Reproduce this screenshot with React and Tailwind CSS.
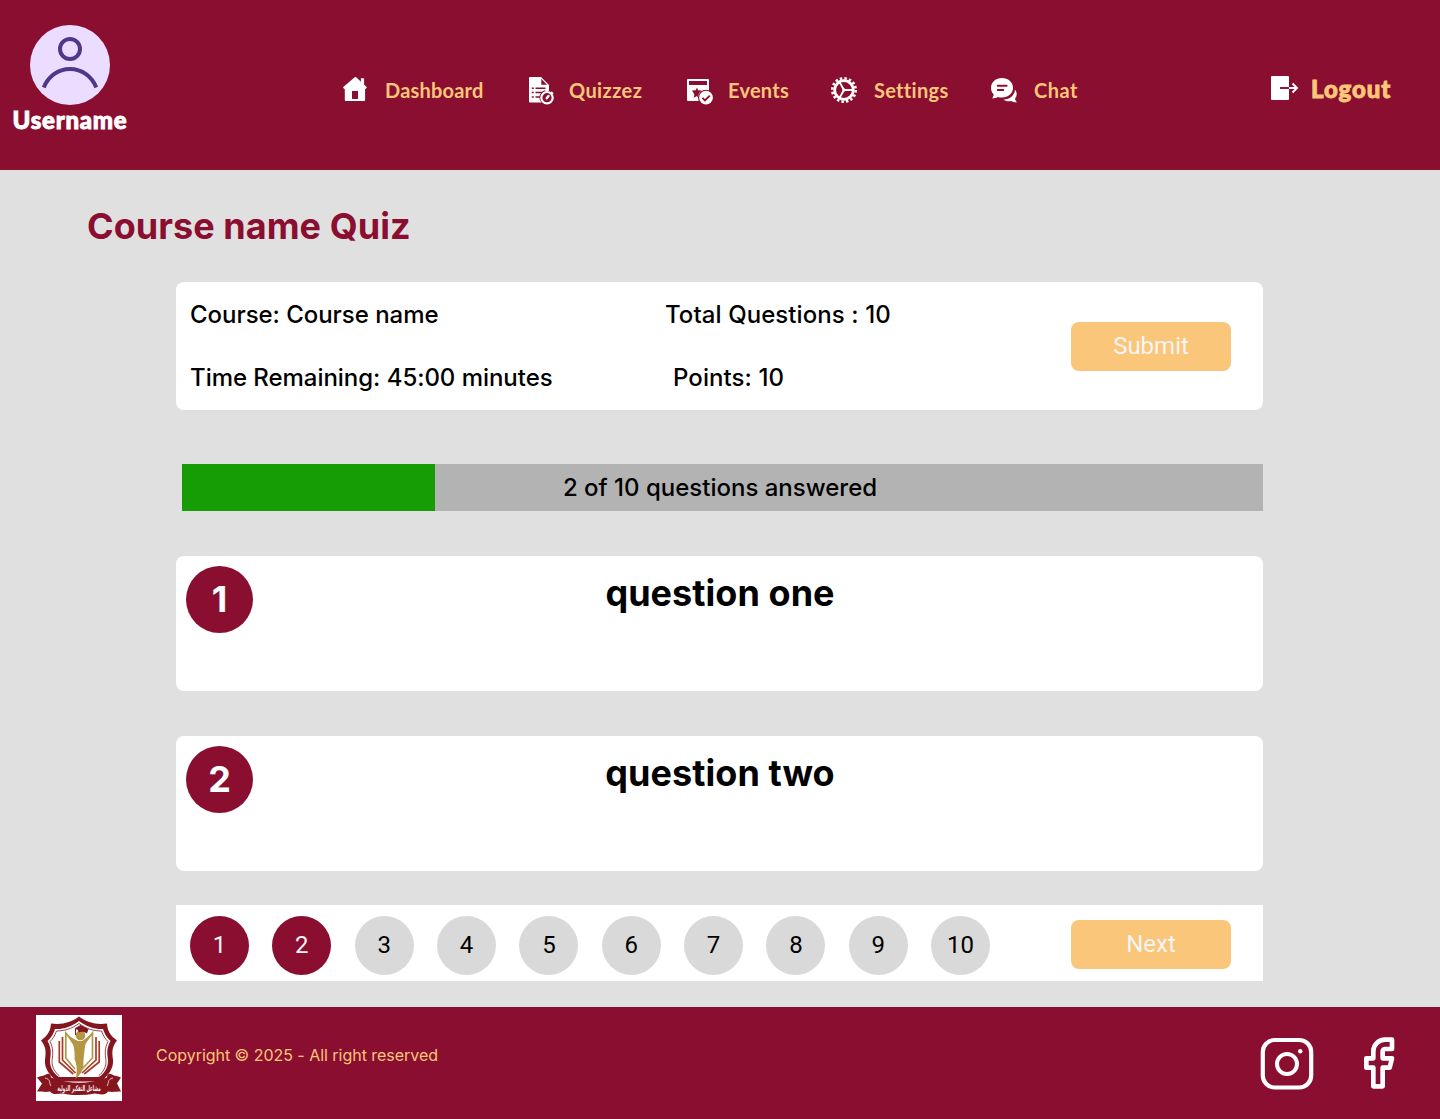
import React from "react";

function HomeIcon() {
  return (
    <svg width="28" height="30" viewBox="0 0 28 30" fill="none" className="block">
      <path fill="#fff" d="M14 2 2 12.300l1.100 1.800.700-.300V25a1 1 0 0 0 1 1h18.300a1 1 0 0 0 1-1V13.800l.700.300 1.100-1.800-2.800-2.800V3.200h-3.200v3.600L15.200 2.300z" />
      <path fill="#8a0e2f" d="M11 16h6v8h-6z" />
    </svg>
  );
}

function QuizIcon() {
  return (
    <svg width="28" height="30" viewBox="0 0 28 30" fill="none" className="block">
      <path fill="#fff" d="M2 2h11l8 8v15.500a2 2 0 0 1-2 2H2a1 1 0 0 1-1-1V3a1 1 0 0 1 1-1z" />
      <path fill="#8a0e2f" d="M13.300 3.700v6h5.600z" />
      <path stroke="#8a0e2f" strokeWidth="1.500" d="M3.800 13.300h2M7.500 13.300h10M3.800 17.600h2M7.500 17.600h8M3.800 22h2M7.500 22h5" />
      <circle cx="19" cy="22.500" r="7.600" fill="#8a0e2f" />
      <circle cx="19" cy="22.700" r="5.700" fill="#8a0e2f" stroke="#fff" strokeWidth="2.200" />
      <path stroke="#fff" strokeWidth="2.400" strokeLinecap="round" d="m18.700 23.300 1.800-2.300" />
      <path stroke="#fff" strokeWidth="1.600" strokeLinecap="round" d="M18 15.600h2M23.600 17.400l1 1" />
    </svg>
  );
}

function EventsIcon() {
  return (
    <svg width="28" height="30" viewBox="0 0 28 30" fill="none" className="block">
      <path fill="#fff" d="M2 4h20a1 1 0 0 1 1 1v21H2a1 1 0 0 1-1-1V5a1 1 0 0 1 1-1z" />
      <path fill="#8a0e2f" d="M3 6h18v4H3z" />
      <path fill="#8a0e2f" d="m11 12.500 1.100 2.800 3.700.2-2.600 2.400-1.300 2.500.4 1.700-1.700-.9-3 1.600.8-3.400L6 15.500l3.700-.2z" />
      <circle cx="20" cy="22.700" r="8" fill="#8a0e2f" />
      <circle cx="20" cy="22.700" r="6.900" fill="#fff" />
      <path stroke="#8a0e2f" strokeWidth="1.900" d="m16.500 22.900 2.500 2.500 4.700-4.700" />
    </svg>
  );
}

function SettingsIcon() {
  return (
    <svg width="28" height="30" viewBox="0 0 28 30" fill="none" stroke="#fff" className="block">
      <circle cx="14" cy="15" r="9.300" strokeWidth="2.700" />
      <circle cx="14" cy="15" r="11.700" strokeWidth="2.600" strokeDasharray="2.500 2.095" />
      <path strokeWidth="1.800" d="M15 15h8.500M13.500 14 9.400 7M13.500 16 9.400 23" />
      <path fill="#fff" stroke="none" d="m11.500 12 6 3-6 3 1-3z" />
    </svg>
  );
}

function ChatIcon() {
  return (
    <svg width="28" height="30" viewBox="0 0 28 30" fill="none" className="block">
      <path fill="#fff" d="M12 3c6 0 11 4 11 9.800s-5 9.800-11 9.800c-1.500 0-2.700-.2-4-.7-1.700 1-3.700 1.500-6 1.400 1-.9 1.600-2.300 1.700-3.800C1.900 17.700 1 15.500 1 12.800 1 7 6 3 12 3z" />
      <path stroke="#8a0e2f" strokeWidth="2" strokeLinecap="round" d="M7.800 10.800h8.800M7.800 15h5.500" />
      <path fill="#fff" d="M25 14.500c2.300 3 2.300 6.300.1 9 .1 1.500.7 2.600 1.900 3.700-2.200.1-4.200-.3-6-1.300-2.800.8-5.500.4-7.500-1.400 6 .1 11.200-4 11.500-10z" />
    </svg>
  );
}

function LogoutIcon() {
  return (
    <svg width="30" height="28" viewBox="0 0 30 28" fill="none" className="block">
      <rect x="1" y="2" width="18" height="24" rx="1" fill="#fff" />
      <path stroke="#8a0e2f" strokeWidth="1.900" d="M10 14h9" />
      <path stroke="#fff" strokeWidth="1.900" d="M19 14h8M22.500 9.500 27 14l-4.500 4.500" />
    </svg>
  );
}

function Avatar() {
  return (
    <svg width="80" height="80" viewBox="0 0 80 80" fill="none" className="block">
      <circle cx="40" cy="40" r="40" fill="#eaddff" />
      <circle cx="40" cy="24" r="10" stroke="#4f378a" strokeWidth="4" />
      <path d="M13.800 62.500C18 51.500 28 44 40 44s22 7.500 26.200 18.500" stroke="#4f378a" strokeWidth="4" />
    </svg>
  );
}

function SchoolLogo() {
  return (
    <svg width="86" height="86" viewBox="0 0 86 86" fill="none" className="block">
      <path fill="#fff" d="M0 0h86v86H0z" />
      <path fill="#85151f" fillRule="evenodd" d="M43 1.500C51 7.500 60 10 71 8.500c.500 7 3 12 10 17-5.500 7-5 12-4 19 1 9-5 16-12 22H21C14 60.500 8 53.500 9 44.500c1-7 1.500-12-4-19 7-5 9.500-10 10-17C26 10 35 7.500 43 1.500zM43 6c-8 6-16 8.500-24 8-1.500 5-4 9-7.500 12 4 7 3.500 12 2.500 19-.500 7 4 14 9 17h40c5-3 9.500-10 9-17-1-7-1.500-12 2.500-19-3.500-3-6-7-7.500-12C59 14.500 51 12 43 6z" />
      <path stroke="#85151f" strokeWidth=".8" d="M43 8.500c-7.500 5.500-15 7.500-22.500 7.500-1.500 4-3.500 8-6.500 10.500 3.500 7 3 12 2 19-.500 6 3 12 7.500 15.500M43 8.500c7.500 5.500 15 7.500 22.500 7.500 1.500 4 3.500 8 6.500 10.500-3.500 7-3 12-2 19 .5 6-3 12-7.500 15.500" />
      <path stroke="#a83b27" strokeWidth="1.700" d="M26.500 22v23l13 13M23.300 26v21l14 12M60 22v23L46 58M63.200 26v21l-15 12" />
      <path stroke="#b59643" strokeWidth="1.700" d="M39 54 29.800 43V18l8.500 10 2 18M46 54l10.500-11V18l-8 10-2 18" />
      <path fill="#b59643" d="M42 26c-4-2-8-4-12-8 3 7 8 11 9 17l-.500 9c2.500 5 3 13 1 20 7-6 9-12 7.500-20l1-9c0-6 5-10 8-17-4 4-7 6-10 8z" />
      <circle cx="44.500" cy="20.500" r="4.800" fill="#b59643" />
      <path fill="#85151f" d="m38.500 13.500 6-3.500 8 4-1.500 4.500c-3-2-6-2-8.500-1l-.500-2.500z" />
      <path stroke="#85151f" strokeWidth="1" d="M39.500 13.500V20" />
      <path fill="#85151f" d="M1 62.500c4-2 6-1 9-3 3-2 5 0 5 3 19 7 37 7 56 0 0-3 2-5 5-3 3 2 5 1 9 3l-4 6 4 8c-5 0-9 1-13 0-3 5-10 2-13 2-11 2-22 2-32 0-5 0-10 2-13-2-4 1-8 0-13 0l5-8z" />
      <path stroke="#fff" strokeWidth=".7" d="M9 63c6 1 4 6 6 8M77 63c-6 1-4 6-6 8" />
      <text transform="translate(43 75.500) scale(.49 1)" textAnchor="middle" fontSize="8" fontWeight="700" fill="#fff" fontFamily="DejaVu Sans, sans-serif">مشاعل التفكير الدولية</text>
    </svg>
  );
}

function InstagramIcon() {
  return (
    <svg width="54" height="54" viewBox="0 0 54 54" fill="none" stroke="#fff" className="block">
      <rect x="2.800" y="3" width="48.400" height="47.500" rx="12" strokeWidth="4.200" />
      <circle cx="27" cy="27" r="10" strokeWidth="4" />
      <circle cx="40.200" cy="14.200" r="2.200" fill="#fff" stroke="none" />
    </svg>
  );
}

function FacebookIcon() {
  return (
    <svg width="56" height="56" viewBox="0 0 24 24" fill="none" stroke="#fff" strokeWidth="2" strokeLinejoin="round" className="block">
      <path d="M18 2h-3a5 5 0 0 0-5 5v3H7v4h3v8h4v-8h3l1-4h-4V7a1 1 0 0 1 1-1h3z" />
    </svg>
  );
}

const navItems = [
  { label: "Dashboard", Icon: HomeIcon, box: "w-[187px] gap-[16px]", text: "tracking-[0.2px]" },
  { label: "Quizzez", Icon: QuizIcon, box: "w-[158px] gap-[13px]", text: "tracking-[0.400px]" },
  { label: "Events", Icon: EventsIcon, box: "w-[144px] gap-[14px]", text: "tracking-[0.25px]" },
  { label: "Settings", Icon: SettingsIcon, box: "w-[160px] gap-[16px]", text: "tracking-[0.3px]" },
  { label: "Chat", Icon: ChatIcon, box: "w-[100px] gap-[16px]", text: "tracking-[0.5px]" },
];

function Header() {
  return (
    <header className="flex h-[170px] bg-[#8a0e2f]">
      <div className="flex w-[140px] flex-col items-center pt-[25px]">
        <Avatar />
        <span className="font-[Lato] text-[24px] font-black leading-[30px] tracking-[0.75px] text-white [-webkit-text-stroke:0.9px_#fff]">Username</span>
      </div>
      <nav className="ml-[201px] flex pt-[75px]">
        {navItems.map(({ label, Icon, box, text }) => (
          <a key={label} className={`flex h-[30px] items-center ${box}`}>
            <Icon />
            <span className={`whitespace-nowrap font-[Lato] text-[20px] font-bold leading-[30px] text-[#fac67a] ${text}`}>{label}</span>
          </a>
        ))}
      </nav>
      <a className="ml-auto mr-[48px] mt-[74px] flex h-[28px] items-center gap-[11px] self-start">
        <LogoutIcon />
        <span className="w-[81px] whitespace-nowrap pt-[2px] font-[Lato] text-[24px] font-black leading-[28px] tracking-[0.9px] text-[#fac67a] [-webkit-text-stroke:0.9px_#fac67a]">Logout</span>
      </a>
    </header>
  );
}

function ActionButton({ children }) {
  return (
    <button className="block h-[49px] w-[160px] rounded-lg bg-[#fac67a] font-[Roboto] text-[24px] leading-[49px] text-[#f5f5f5]">{children}</button>
  );
}

function Question({ number, title }) {
  return (
    <section className="flex h-[135px] rounded-lg bg-white p-[10px]">
      <span className="flex size-[67px] shrink-0 justify-center rounded-full bg-[#8a0e2f] text-[36px] font-bold leading-[66px] text-white">{number}</span>
      <h2 className="mr-[66px] flex-1 pt-[5px] text-center text-[36px] font-bold leading-[44px] tracking-[0.05px]">{title}</h2>
    </section>
  );
}

const pages = [1, 2, 3, 4, 5, 6, 7, 8, 9, 10];

export default function App() {
  return (
    <div className="flex h-[1119px] w-[1440px] flex-col overflow-hidden bg-[#e0e0e0] font-[Inter] text-black">
      <Header />
      <main className="h-[837px] pt-[34px]">
        <h1 className="ml-[87px] text-[36px] font-bold leading-[44px] tracking-[0.05px] text-[#8a0e2f]">Course name Quiz</h1>
        <div className="ml-[176px] w-[1087px]">
          <section className="mt-[34px] flex h-[128px] rounded-lg bg-white pl-[14px] pr-[32px] text-[24px] font-medium leading-[29px]">
            <div className="flex w-[475px] flex-col gap-[34px] pt-[18px] tracking-[-0.04px]">
              <p>Course: Course name</p>
              <p>Time Remaining: 45:00 minutes</p>
            </div>
            <div className="flex flex-col gap-[34px] pt-[18px] tracking-[0.08px]">
              <p>Total Questions : 10</p>
              <p className="pl-[8px]">Points: 10</p>
            </div>
            <div className="ml-auto pt-[39.500px] font-normal tracking-normal">
              <ActionButton>Submit</ActionButton>
            </div>
          </section>
          <div className="ml-[6px] mt-[54px] grid h-[47px] bg-[#b3b3b3]">
            <div className="col-start-1 row-start-1 w-[253px] bg-[#169c05]" />
            <p className="col-start-1 row-start-1 self-center pr-[5px] text-center text-[24px] font-medium leading-[29px]">2 of 10 questions answered</p>
          </div>
          <div className="mt-[45px] flex flex-col gap-[45px]">
            <Question number={1} title="question one" />
            <Question number={2} title="question two" />
          </div>
          <div className="mt-[34px] flex h-[76px] items-start bg-white pl-[14px] pr-[32px] pt-[11px]">
            <div className="flex gap-[23.350px]">
              {pages.map((n) => (
                <span key={n} className={`flex size-[59px] justify-center rounded-full font-[Roboto] text-[24px] leading-[58px] ${n < 3 ? "bg-[#8a0e2f] text-[#f5f5f5]" : "bg-[#d9d9d9] text-black"}`}>{n}</span>
              ))}
            </div>
            <div className="ml-auto mt-[4px]">
              <ActionButton>Next</ActionButton>
            </div>
          </div>
        </div>
      </main>
      <footer className="flex h-[112px] bg-[#8a0e2f] pl-[36px] pr-[34px] pt-[8px]">
        <SchoolLogo />
        <p className="ml-[34px] mt-[31px] text-[16px] leading-[19px] tracking-[-0.03px] text-[#fac67a]">Copyright © 2025 - All right reserved</p>
        <div className="ml-auto flex gap-[36px]">
          <div className="mt-[22px]"><InstagramIcon /></div>
          <div className="mt-[20px]"><FacebookIcon /></div>
        </div>
      </footer>
    </div>
  );
}
